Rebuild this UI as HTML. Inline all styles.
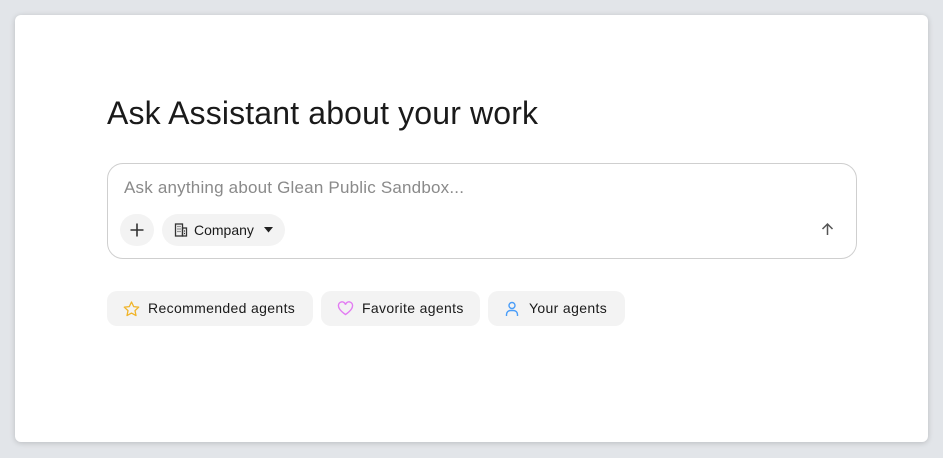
<!DOCTYPE html>
<html><head><style>
body{margin:0;width:943px;height:458px;background:#e2e5e9;font-family:"Liberation Sans",sans-serif;position:relative;overflow:hidden}
.card{position:absolute;left:15px;top:15px;width:913px;height:427px;background:#fff;border-radius:6px;box-shadow:0 1px 6px rgba(0,0,0,.18)}
h1{position:absolute;left:107px;top:95px;margin:0;font-size:32px;font-weight:400;color:#1a1a1a;letter-spacing:0.15px}
.box{position:absolute;left:107px;top:163px;width:748px;height:94px;border:1px solid #cfcfcf;border-radius:16px}
.ph{position:absolute;left:124px;top:178px;font-size:17px;color:#8a8a8a;letter-spacing:0.2px}
.plus{position:absolute;left:120px;top:214px;width:34px;height:32px;border-radius:16px;background:#f3f3f3}
.co{position:absolute;left:162px;top:214px;width:123px;height:32px;border-radius:16px;background:#f3f3f3;font-size:14px;color:#1a1a1a}
.chip{position:absolute;top:291px;height:35px;border-radius:10px;background:#f3f3f3;font-size:14px;color:#1a1a1a;line-height:35px;letter-spacing:0.35px}
.chip svg{position:absolute;left:16px;top:10px}
.chip span{position:absolute;left:41px}
</style></head><body>
<div class="card"></div>
<h1>Ask Assistant about your work</h1>
<div class="box"></div>
<div class="ph">Ask anything about Glean Public Sandbox...</div>
<div class="plus"><svg width="34" height="32"><path d="M17 9.5v13M10.5 16h13" stroke="#333" stroke-width="1.6"/></svg></div>
<div class="co"><svg style="position:absolute;left:12px;top:9px" width="14" height="14" viewBox="0 0 14 14" fill="none" stroke="#333" stroke-width="1.3"><rect x="1.5" y="1" width="7" height="12"/><rect x="8.5" y="5" width="4" height="8"/><path d="M3.5 3.5h1M5.5 3.5h1M3.5 6h1M5.5 6h1M3.5 8.5h1M5.5 8.5h1M10 8h1M10 10.5h1"/></svg><span style="position:absolute;left:32px;top:8px">Company</span><svg style="position:absolute;left:102px;top:13px" width="9" height="6"><path d="M0 0h9L4.5 5.5z" fill="#222"/></svg></div>
<svg style="position:absolute;left:820px;top:222px" width="15" height="15" viewBox="0 0 15 15"><path d="M7.5 13V2M2.5 7l5-5 5 5" stroke="#555" stroke-width="1.5" fill="none"/></svg>
<div class="chip" style="left:107px;width:206px"><svg width="17" height="16" viewBox="0 0 17 16"><path d="M8.5 1l2.2 4.6 5 .6-3.7 3.4 1 5-4.5-2.5-4.5 2.5 1-5L1.3 6.2l5-.6z" fill="none" stroke="#f0b429" stroke-width="1.3" stroke-linejoin="round"/></svg><span>Recommended agents</span></div>
<div class="chip" style="left:321px;width:159px"><svg width="17" height="15" viewBox="0 0 17 15"><path d="M8.5 13.5S1.5 9 1.5 5a3.3 3.3 0 0 1 7-1.2A3.3 3.3 0 0 1 15.5 5c0 4-7 8.5-7 8.5z" fill="none" stroke="#e27cf2" stroke-width="1.4"/></svg><span>Favorite agents</span></div>
<div class="chip" style="left:488px;width:137px"><svg width="16" height="16" viewBox="0 0 16 16"><circle cx="8" cy="4.5" r="3" fill="none" stroke="#4a9df8" stroke-width="1.4"/><path d="M2.5 15v-1.5a4 4 0 0 1 4-4h3a4 4 0 0 1 4 4V15" fill="none" stroke="#4a9df8" stroke-width="1.4"/></svg><span>Your agents</span></div>
</body></html>
